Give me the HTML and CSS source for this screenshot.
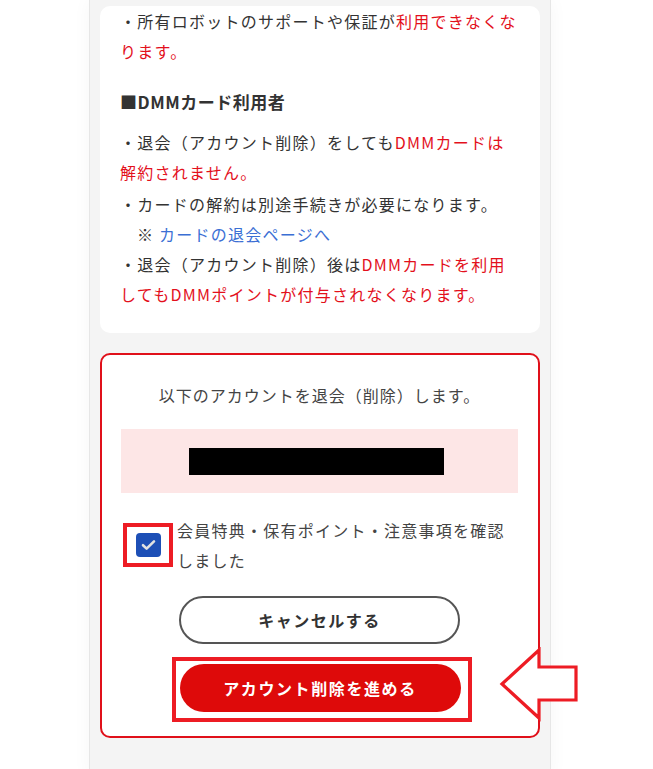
FILE: index.html
```html
<!DOCTYPE html>
<html lang="ja">
<head>
    <meta charset="UTF-8">
    <meta name="viewport" content="width=device-width, initial-scale=1.0">
    <title>退会手続き</title>
    <link rel="stylesheet" href="styles.css">
</head>
<body>
<div class="page">
    <div class="notice">
        <p class="first">・所有ロボットのサポートや保証が<span class="red">利用できなくなります。</span></p>

        <h2>■DMMカード利用者</h2>
        <p>・退会（アカウント削除）をしても<span class="red">DMMカードは解約されません。</span></p>
        <p class="tight">・カードの解約は別途手続きが必要になります。</p>
        <p class="note">※ <a href="#">カードの退会ページへ</a></p>
        <p>・退会（アカウント削除）後は<span class="red">DMMカードを利用してもDMMポイントが付与されなくなります。</span></p>
    </div>

    <div class="confirm">
        <p class="lead">以下のアカウントを退会（削除）します。</p>
        <div class="account">
            <div class="masked"></div>
        </div>

        <div class="agree">
            <span class="mark">
                <span class="checkbox">
                    <svg width="15" height="12" viewBox="0 0 15 12"><path d="M2 6.2l3.6 3.4L13 2.4" fill="none" stroke="#e2e2e2" stroke-width="2.6" stroke-linecap="round" stroke-linejoin="round"/></svg>
                </span>
            </span>
            <label>会員特典・保有ポイント・注意事項を確認しました</label>
        </div>

        <button class="btn cancel">キャンセルする</button>
        <div class="mark-wide">
            <button class="btn delete">アカウント削除を進める</button>
        </div>
    </div>

    <svg class="arrow" width="84" height="80" viewBox="0 0 84 80">
        <polygon points="4,37 41,3 41,20 78,20 78,53 41,53 41,71" fill="#fff" stroke="#ed1c24" stroke-width="3.2" stroke-linejoin="miter"/>
    </svg>
</div>
</body>
</html>
```

FILE: styles.css
```css
body {
    margin: 0;
    background: #fff;
    font-family: "Noto Sans CJK JP", "Noto Sans", sans-serif;
    color: #333;
    overflow: hidden;
}
.page {
    position: relative;
    margin-left: 89px;
    width: 440px;
    min-height: 769px;
    padding: 8px 10px 0;
    background: #f4f4f4;
    border-left: 1px solid #e6e6e6;
    border-right: 1px solid #e6e6e6;
    box-shadow: 0 0 18px rgba(0, 0, 0, 0.04);
}
.notice {
    background: #fff;
    border-radius: 10px;
    padding: 0 20px 24px;
    font-size: 16px;
    line-height: 30px;
    letter-spacing: 1.25px;
}
.notice p {
    margin: 0;
}
.notice .first {
    margin-top: -2px;
}
.notice h2 {
    margin: 21px 0 10px;
    font-size: 17px;
    line-height: 30px;
    font-weight: bold;
    letter-spacing: 0.5px;
}
.notice .tight {
    margin-top: 2px;
}
.notice .note {
    padding-left: 17px;
}
.notice a {
    color: #3b6fd4;
    text-decoration: none;
}
.red {
    color: #e3101c;
}
.confirm {
    margin-top: 20px;
    background: #fff;
    border: 2px solid #e0101a;
    border-radius: 10px;
    padding: 25px 20px 14px 19px;
    display: flex;
    flex-direction: column;
    align-items: center;
}
.lead {
    margin: 0;
    font-size: 16px;
    line-height: 30px;
    letter-spacing: 1px;
    color: #444;
}
.account {
    align-self: stretch;
    margin-top: 19px;
    height: 64px;
    background: #fde6e6;
    display: flex;
    align-items: center;
    justify-content: center;
}
.masked {
    width: 255px;
    height: 27px;
    background: #000;
    margin-right: 6px;
}
.agree {
    align-self: stretch;
    margin-top: 22px;
    display: flex;
    align-items: flex-start;
}
.mark {
    margin: 8px 0 0 2px;
    border: 4px solid #ed1c24;
    padding: 6px 8px 6px 9px;
    display: flex;
}
.checkbox {
    width: 25px;
    height: 24px;
    border-radius: 4px;
    background: #1d4fb6;
    display: flex;
    align-items: center;
    justify-content: center;
}
.agree label {
    margin-left: 4px;
    padding-right: 12px;
    font-size: 16px;
    line-height: 30px;
    letter-spacing: 1.25px;
    color: #444;
}
.btn {
    display: block;
    width: 281px;
    height: 48px;
    border-radius: 24px;
    font-family: inherit;
    font-size: 16px;
    font-weight: bold;
    letter-spacing: 1.5px;
    cursor: pointer;
}
.cancel {
    margin-top: 21px;
    background: #fff;
    border: 2px solid #555;
    color: #333;
}
.mark-wide {
    margin: 13px 0 0 4px;
    border: 4px solid #ed1c24;
    padding: 3px 7px 6px 4px;
}
.delete {
    border: none;
    background: #de0a0a;
    color: #fff;
    letter-spacing: 1.6px;
}
.arrow {
    position: absolute;
    left: 408px;
    top: 647px;
}
```
